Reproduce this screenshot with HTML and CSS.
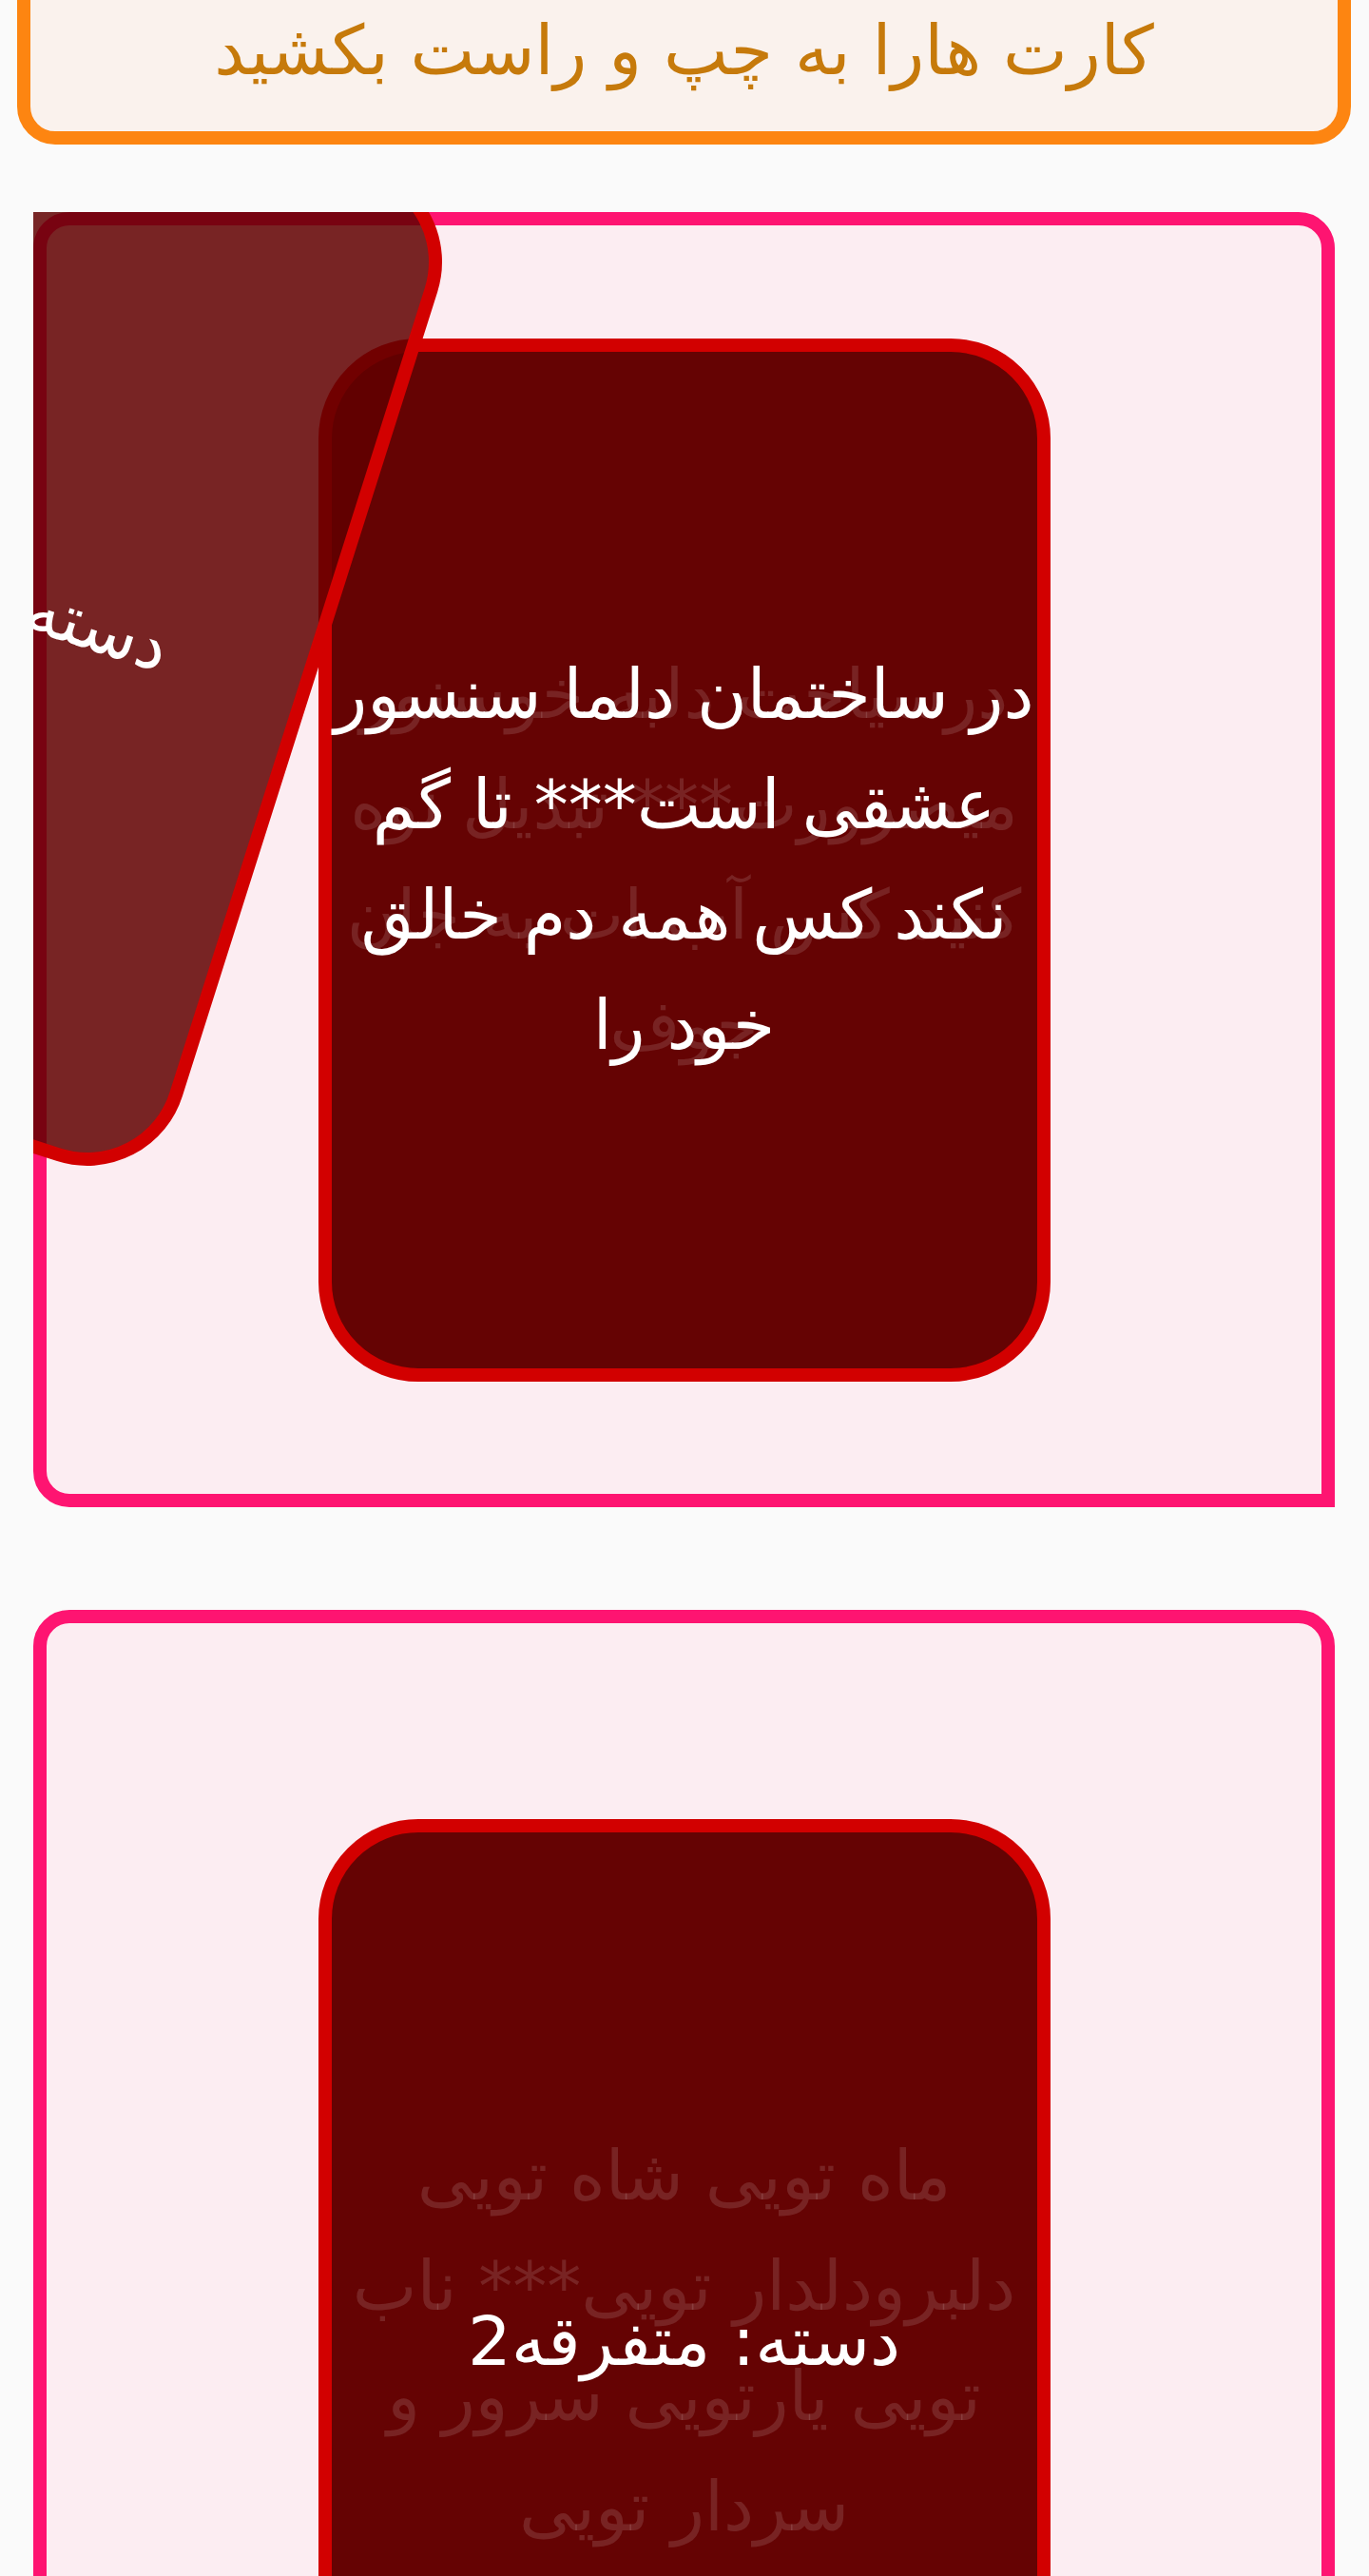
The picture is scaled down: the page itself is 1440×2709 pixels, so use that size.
FILE: index.html
```html
<!DOCTYPE html>
<html lang="fa" dir="rtl">
<head>
<meta charset="utf-8">
<title>کارت ها</title>
<link rel="stylesheet" href="styles.css">
</head>
<body>
<header class="banner">
  <h1 class="banner-title">کارت هارا به چپ و راست بکشید</h1>
</header>
<main class="decks">
  <section class="deck deck--first">
    <div class="deck-frame deck-frame--first">
      <div class="card">
        <p class="card-ghost">درسیاحت دلبه خوسنور<br>میضرورت*** تبدیل نوه<br>کنید کس آب ات به جان<br>جوف</p>
        <p class="card-text">در ساختمان دلما سنسور<br>عشقی است*** تا گم<br>نکند کس همه دم خالق<br>خود را</p>
      </div>
    </div>
    <div class="card card--swiped">
      <p class="card-text">دسته: متفرقه1</p>
    </div>
  </section>
  <section class="deck deck--second">
    <div class="deck-frame deck-frame--second">
      <div class="card">
        <p class="card-ghost">ماه تویی شاه تویی<br>دلبرودلدار تویی*** ناب<br>تویی یارتویی سرور و<br>سردار تویی</p>
        <p class="card-text">دسته: متفرقه2</p>
      </div>
    </div>
  </section>
</main>
</body>
</html>
```
FILE: styles.css
```css
* { box-sizing: border-box; }
html, body { margin: 0; padding: 0; }
body {
  background: #fafafa;
  font-family: "DejaVu Sans", "Noto Sans", sans-serif;
  direction: rtl;
  overflow: hidden;
}
.banner {
  margin: -46px 19px 0 18px;
  height: 198px;
  border: 14px solid #fd8511;
  border-radius: 40px;
  background: #faf2ed;
  display: flex;
  align-items: center;
  justify-content: center;
}
.banner-title {
  margin: 0;
  font-size: 72px;
  font-weight: normal;
  line-height: 1;
  color: #c67a0b;
}
.decks {
  display: flex;
  flex-direction: column;
  gap: 108px;
  padding-top: 71px;
}
.deck {
  position: relative;
  overflow: hidden;
  margin: 0 36px 0 35px;
}
.deck-frame {
  border: 14px solid #fe1471;
  background: #fcedf2;
  display: flex;
  align-items: center;
  justify-content: center;
}
.deck-frame--first {
  height: 1362px;
  border-radius: 38px 38px 0 38px;
}
.deck-frame--second {
  height: 1537px;
  border-radius: 38px;
}
.card {
  position: relative;
  width: 770px;
  height: 1097px;
  border: 14px solid #d20000;
  border-radius: 105px;
  background: #650303;
  display: flex;
  align-items: center;
  justify-content: center;
  text-align: center;
}
.card-text,
.card-ghost {
  margin: 0;
  font-size: 72px;
  line-height: 116px;
  white-space: nowrap;
}
.card-text {
  position: relative;
  color: #ffffff;
}
.card-ghost {
  position: absolute;
  inset: 0;
  display: flex;
  align-items: center;
  justify-content: center;
  color: rgba(255, 255, 255, 0.13);
}
.card--swiped {
  position: absolute;
  left: 300px;
  top: 132px;
  background: rgba(96, 0, 0, 0.85);
  transform: translate(-761px, -290px) rotate(17.6deg);
}
```
